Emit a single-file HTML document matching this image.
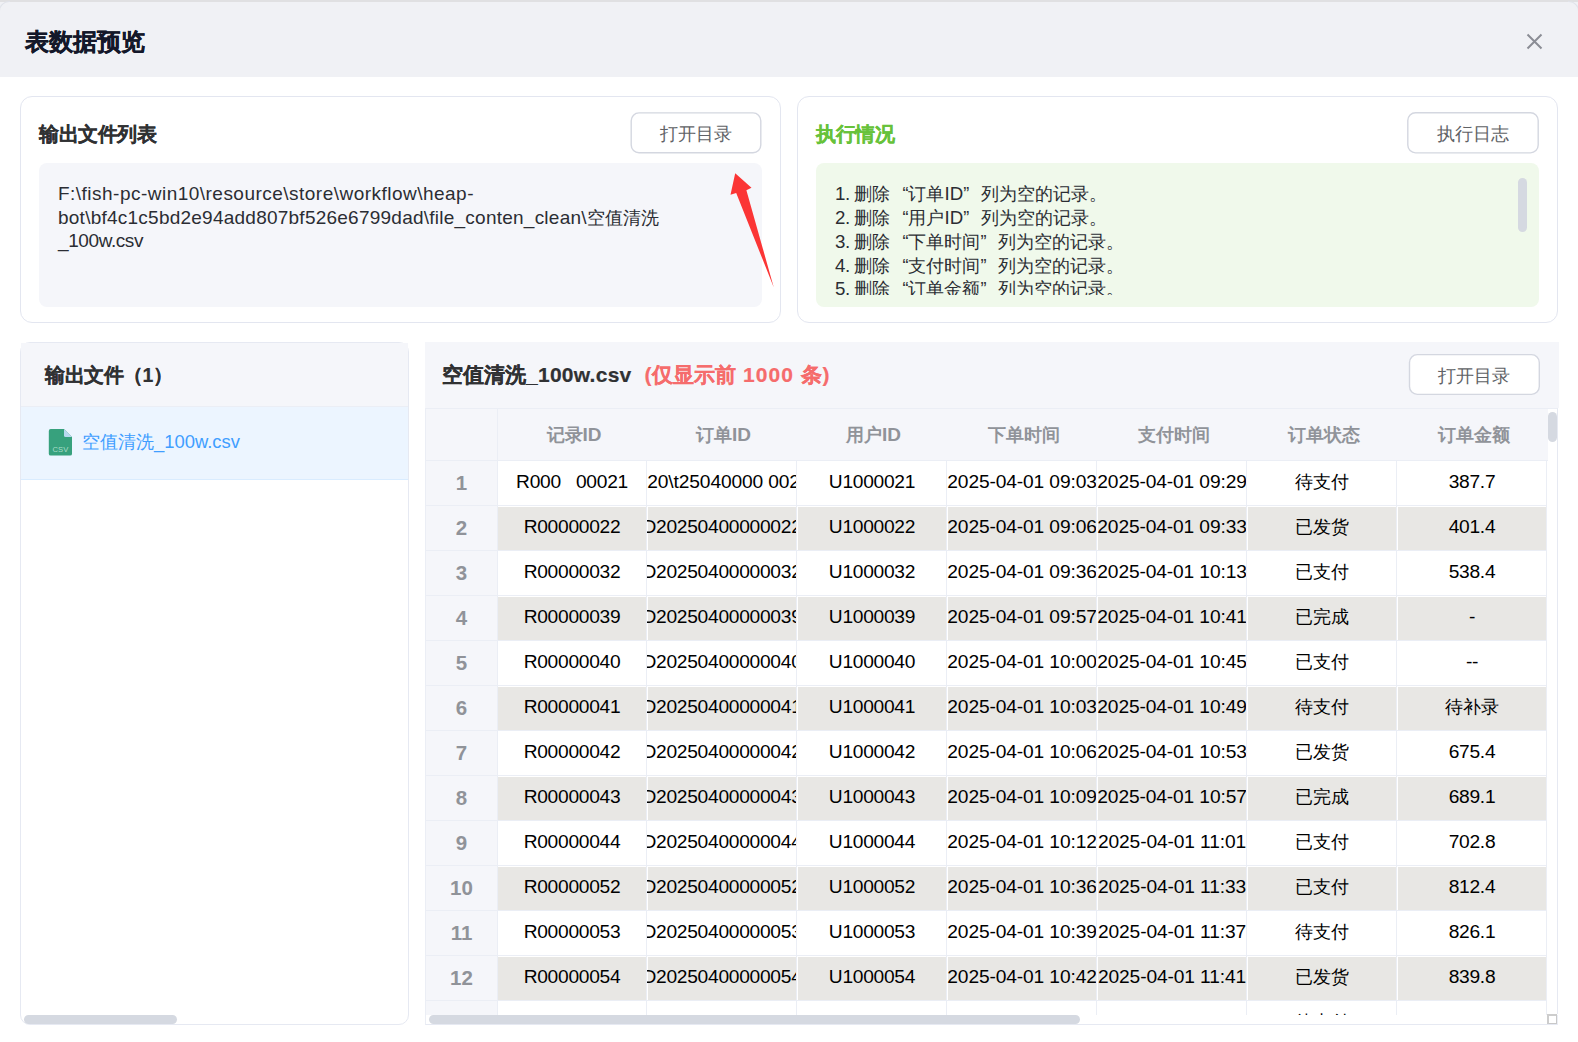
<!DOCTYPE html>
<html lang="zh">
<head>
<meta charset="utf-8">
<title>表数据预览</title>
<style>
html,body{margin:0;padding:0;}
body{width:1578px;height:1042px;overflow:hidden;background:#fff;position:relative;
  font-family:"Liberation Sans",sans-serif;color:#303133;}
*{box-sizing:border-box;}
.abs{position:absolute;}
#topstrip{left:0;top:0;width:1578px;height:2px;background:#e0e0e2;}
#hdr{left:0;top:2px;width:1578px;height:75px;background:#f0f1f5;}
#title{left:25px;top:27px;font-size:24px;line-height:30px;font-weight:bold;color:#14182a;white-space:nowrap;-webkit-text-stroke:0.3px #14182a;}
#close{left:1526px;top:33px;width:17px;height:17px;}
.card{border:1px solid #e3e6f0;border-radius:12px;background:#fff;}
#card1{left:20px;top:96px;width:761px;height:227px;}
#card2{left:797px;top:96px;width:761px;height:227px;}
.ctitle{font-size:19.5px;line-height:26px;font-weight:bold;white-space:nowrap;letter-spacing:-0.5px;-webkit-text-stroke:0.2px currentColor;}
.btn{width:131px;height:41px;border:1.5px solid #d5d8e0;border-radius:8px;background:#fff;
  font-size:18px;line-height:41px;text-align:center;color:#606266;white-space:nowrap;}
.btxt{font-size:18px;line-height:24px;color:#606266;white-space:nowrap;}
.box{border-radius:8px;}
#gbox{left:39px;top:163px;width:723px;height:144px;background:#f5f6fa;}
#vbox{left:816px;top:163px;width:723px;height:144px;background:#f0f9eb;overflow:hidden;}
.ptxt{font-size:18px;line-height:23.7px;color:#2b2d33;white-space:nowrap;}
.la{font-size:18.7px;}
.ln1{height:23.6px;line-height:23.6px;}
.ln2{height:23.87px;line-height:23.87px;}
.ln{font-size:18.7px;letter-spacing:-0.45px;}
.pr{display:inline-block;width:8.7px;text-align:center;}
.q{display:inline-block;width:18px;}
.q.l{text-align:right;}
.q.r{text-align:left;}
#lpanel{left:20px;top:342px;width:389px;height:683px;border:1px solid #e6e9f2;border-radius:10px;background:#fff;}
#lhead{left:0;top:0;width:387px;height:64px;background:#f5f6fa;border-bottom:1px solid #ebeef5;}
#lrow{left:0;top:64px;width:387px;height:73px;background:#ecf5ff;border-bottom:1px solid #d9ecff;}
#rpanel{left:425px;top:342px;width:1134px;height:683px;background:#fff;}
#rhead{left:0;top:0;width:1134px;height:66px;background:#f5f6fa;}
.thumb{background:#d5d9e1;border-radius:5px;}
/* table */
#tbl{left:425px;top:408px;width:1123px;height:607px;overflow:hidden;background:#fff;border-left:1px solid #ebeef5;}
.thead,.tr{display:flex;width:1123px;}
.thead .th:last-child{width:151px;padding-right:1px;}
.th{width:150px;height:53px;flex:none;background:#f5f6fa;border-bottom:1px solid #ebeef5;border-top:1px solid #ebeef5;
  font-size:18px;font-weight:bold;color:#909399;display:flex;align-items:center;justify-content:center;white-space:nowrap;padding-left:3px;}
.td{width:150px;height:45px;flex:none;border-right:1px solid #ebeef5;border-bottom:1px solid #ebeef5;
  font-size:18px;color:#000;display:flex;align-items:center;justify-content:center;white-space:nowrap;overflow:hidden;padding:1px 0 0 1px;background-clip:content-box;}
.idx{width:72px;}
.th.idx{border-right:1px solid #ebeef5;padding:0;}
.c1{width:149px;}
.td.c1{padding-left:0;}
.td.idx{background:#f5f6fa;font-weight:bold;color:#909399;padding:0;}
.tr.even .td{background-color:#e8e7e4;}
.tr.even .td.idx{background-color:#f5f6fa;}
.td span{flex:none;position:relative;top:-2px;}
.td span.la{font-size:19.2px;letter-spacing:-0.28px;top:-1.5px;}
.td.idx span{font-size:20.5px;top:0;}
.th .hl{font-size:19px;}
</style>
</head>
<body>
<div id="topstrip" class="abs"></div>
<div id="hdr" class="abs"></div>
<div class="abs" style="left:-1px;top:1px;width:11px;height:11px;border-top-left-radius:10px;border-top:1px solid #e0e3ea;border-left:1px solid #e0e3ea;"></div>
<div class="abs" style="left:1568px;top:1px;width:11px;height:11px;border-top-right-radius:10px;border-top:1px solid #e0e3ea;border-right:1px solid #e0e3ea;"></div>
<div id="title" class="abs">表数据预览</div>
<svg id="close" class="abs" viewBox="0 0 17 17"><path d="M1.5 1.5L15.5 15.5M15.5 1.5L1.5 15.5" stroke="#8b8d95" stroke-width="2" fill="none"/></svg>

<div id="card1" class="abs card"></div>
<div class="abs ctitle" style="left:39px;top:121px;color:#303133;">输出文件列表</div>
<svg class="abs" style="left:629px;top:111px;" width="134" height="44" viewBox="629 111 134 44"><rect x="631.20" y="112.90" width="129.60" height="39.80" rx="7.8" fill="#fff" stroke="#d4d7e0" stroke-width="1.4"/></svg><div class="abs btxt" style="left:660px;top:122px;">打开目录</div>
<div id="gbox" class="abs box"></div>
<div class="abs ptxt" style="left:58px;top:182px;"><div class="ln1" style="height:23.6px"><span style="font-size:19px;letter-spacing:0.48px">F:\fish-pc-win10\resource\store\workflow\heap-</span></div><div class="ln1" style="height:23.6px"><span style="font-size:19px;letter-spacing:0.24px">bot\bf4c1c5bd2e94add807bf526e6799dad\file_conten_clean\</span>空值清洗</div><div class="ln1" style="height:23.6px"><span style="font-size:19px;letter-spacing:-0.41px">_100w.csv</span></div></div>
<svg class="abs" style="left:725px;top:168px;" width="56" height="126" viewBox="725 168 56 126"><path d="M735.2 173.2L751.5 187.8L746.4 190.2L773.8 287.5L736.2 193L730.5 194.8Z" fill="#fb3535"/></svg>

<div id="card2" class="abs card"></div>
<div class="abs ctitle" style="left:816px;top:121px;color:#67c23a;">执行情况</div>
<svg class="abs" style="left:1406px;top:111px;" width="134" height="44" viewBox="1406 111 134 44"><rect x="1407.80" y="112.70" width="130.40" height="40.20" rx="7.8" fill="#fff" stroke="#d4d7e0" stroke-width="1.4"/></svg><div class="abs btxt" style="left:1437px;top:122px;">执行日志</div>
<div id="vbox" class="abs box">
  <div class="abs" style="left:12px;top:12px;width:699px;height:120px;overflow:hidden;">
    <div class="abs ptxt" style="left:7px;top:7px;"><div class="ln2"><span class="ln">1. </span>删除<span class="q l">“</span>订单<span class="la">ID</span><span class="q r">”</span>列为空的记录。</div><div class="ln2"><span class="ln">2. </span>删除<span class="q l">“</span>用户<span class="la">ID</span><span class="q r">”</span>列为空的记录。</div><div class="ln2"><span class="ln">3. </span>删除<span class="q l">“</span>下单时间<span class="q r">”</span>列为空的记录。</div><div class="ln2"><span class="ln">4. </span>删除<span class="q l">“</span>支付时间<span class="q r">”</span>列为空的记录。</div><div class="ln2"><span class="ln">5. </span>删除<span class="q l">“</span>订单金额<span class="q r">”</span>列为空的记录。</div><div class="ln2"><span class="ln">6. </span>删除<span class="q l">“</span>订单状态<span class="q r">”</span>列为空的记录。</div></div>
  </div>
  <div class="abs thumb" style="left:702px;top:15px;width:9px;height:54px;"></div>
</div>

<div id="lpanel" class="abs">
  <div id="lhead" class="abs"></div>
  <div id="lrow" class="abs"></div>
  <div class="abs thumb" style="left:3px;top:672px;width:153px;height:9px;"></div>
</div>
<div class="abs ctitle" style="left:45px;top:362px;color:#303133;">输出文件（1）</div>
<svg class="abs" style="left:48px;top:428px;" width="25" height="28" viewBox="0 0 25 28"><path d="M2.7 1H16L24 9V25.7Q24 27.6 22.1 27.6H2.7Q0.8 27.6 0.8 25.7V2.9Q0.8 1 2.7 1Z" fill="#37a17d"/><path d="M16 1L24 9H17.5Q16 9 16 7.5Z" fill="#b9d8f0"/><text x="4.6" y="23.6" font-family="Liberation Sans, sans-serif" font-size="7.6" fill="#a9ddc8">CSV</text></svg>
<div class="abs" style="left:82px;top:430px;font-size:18px;line-height:24px;color:#409eff;white-space:nowrap;">空值清洗<span style="font-size:18.4px;">_100w.csv</span></div>

<div id="rpanel" class="abs"><div id="rhead" class="abs"></div></div>
<div class="abs ctitle" style="left:442px;top:362px;color:#303133;font-size:21px;letter-spacing:0;">空值清洗<span style="letter-spacing:0.27px">_100w.csv</span><span style="color:#f56c6c;margin-left:12px;"><span class="pr">(</span>仅显示前<span style="letter-spacing:1px"> 1000 </span>条<span class="pr">)</span></span></div>
<svg class="abs" style="left:1407px;top:352px;" width="135" height="45" viewBox="1407 352 135 45"><rect x="1409.50" y="354.60" width="129.80" height="39.80" rx="7.8" fill="#fff" stroke="#d4d7e0" stroke-width="1.4"/></svg><div class="abs btxt" style="left:1438px;top:364px;">打开目录</div>

<div id="tbl" class="abs">
<div class="thead"><div class="th idx"></div><div class="th c1">记录<span class="hl">ID</span></div><div class="th">订单<span class="hl">ID</span></div><div class="th">用户<span class="hl">ID</span></div><div class="th">下单时间</div><div class="th">支付时间</div><div class="th">订单状态</div><div class="th">订单金额</div></div>
<div class="tr"><div class="td idx"><span>1</span></div><div class="td c1"><span class="la">R000&nbsp;&nbsp;&nbsp;00021</span></div><div class="td"><span class="la" style="letter-spacing:-0.13px">D20\t25040000 0021</span></div><div class="td"><span class="la">U1000021</span></div><div class="td"><span class="la" style="letter-spacing:-0.13px">2025-04-01 09:03</span></div><div class="td"><span class="la" style="letter-spacing:-0.13px">2025-04-01 09:29</span></div><div class="td"><span class="cj">待支付</span></div><div class="td"><span class="la">387.7</span></div></div>
<div class="tr even"><div class="td idx"><span>2</span></div><div class="td c1"><span class="la">R00000022</span></div><div class="td"><span class="la">D20250400000022</span></div><div class="td"><span class="la">U1000022</span></div><div class="td"><span class="la" style="letter-spacing:-0.13px">2025-04-01 09:06</span></div><div class="td"><span class="la" style="letter-spacing:-0.13px">2025-04-01 09:33</span></div><div class="td"><span class="cj">已发货</span></div><div class="td"><span class="la">401.4</span></div></div>
<div class="tr"><div class="td idx"><span>3</span></div><div class="td c1"><span class="la">R00000032</span></div><div class="td"><span class="la">D20250400000032</span></div><div class="td"><span class="la">U1000032</span></div><div class="td"><span class="la" style="letter-spacing:-0.13px">2025-04-01 09:36</span></div><div class="td"><span class="la" style="letter-spacing:-0.13px">2025-04-01 10:13</span></div><div class="td"><span class="cj">已支付</span></div><div class="td"><span class="la">538.4</span></div></div>
<div class="tr even"><div class="td idx"><span>4</span></div><div class="td c1"><span class="la">R00000039</span></div><div class="td"><span class="la">D20250400000039</span></div><div class="td"><span class="la">U1000039</span></div><div class="td"><span class="la" style="letter-spacing:-0.13px">2025-04-01 09:57</span></div><div class="td"><span class="la" style="letter-spacing:-0.13px">2025-04-01 10:41</span></div><div class="td"><span class="cj">已完成</span></div><div class="td"><span class="la">-</span></div></div>
<div class="tr"><div class="td idx"><span>5</span></div><div class="td c1"><span class="la">R00000040</span></div><div class="td"><span class="la">D20250400000040</span></div><div class="td"><span class="la">U1000040</span></div><div class="td"><span class="la" style="letter-spacing:-0.13px">2025-04-01 10:00</span></div><div class="td"><span class="la" style="letter-spacing:-0.13px">2025-04-01 10:45</span></div><div class="td"><span class="cj">已支付</span></div><div class="td"><span class="la">--</span></div></div>
<div class="tr even"><div class="td idx"><span>6</span></div><div class="td c1"><span class="la">R00000041</span></div><div class="td"><span class="la">D20250400000041</span></div><div class="td"><span class="la">U1000041</span></div><div class="td"><span class="la" style="letter-spacing:-0.13px">2025-04-01 10:03</span></div><div class="td"><span class="la" style="letter-spacing:-0.13px">2025-04-01 10:49</span></div><div class="td"><span class="cj">待支付</span></div><div class="td"><span class="cj">待补录</span></div></div>
<div class="tr"><div class="td idx"><span>7</span></div><div class="td c1"><span class="la">R00000042</span></div><div class="td"><span class="la">D20250400000042</span></div><div class="td"><span class="la">U1000042</span></div><div class="td"><span class="la" style="letter-spacing:-0.13px">2025-04-01 10:06</span></div><div class="td"><span class="la" style="letter-spacing:-0.13px">2025-04-01 10:53</span></div><div class="td"><span class="cj">已发货</span></div><div class="td"><span class="la">675.4</span></div></div>
<div class="tr even"><div class="td idx"><span>8</span></div><div class="td c1"><span class="la">R00000043</span></div><div class="td"><span class="la">D20250400000043</span></div><div class="td"><span class="la">U1000043</span></div><div class="td"><span class="la" style="letter-spacing:-0.13px">2025-04-01 10:09</span></div><div class="td"><span class="la" style="letter-spacing:-0.13px">2025-04-01 10:57</span></div><div class="td"><span class="cj">已完成</span></div><div class="td"><span class="la">689.1</span></div></div>
<div class="tr"><div class="td idx"><span>9</span></div><div class="td c1"><span class="la">R00000044</span></div><div class="td"><span class="la">D20250400000044</span></div><div class="td"><span class="la">U1000044</span></div><div class="td"><span class="la" style="letter-spacing:-0.13px">2025-04-01 10:12</span></div><div class="td"><span class="la" style="letter-spacing:-0.13px">2025-04-01 11:01</span></div><div class="td"><span class="cj">已支付</span></div><div class="td"><span class="la">702.8</span></div></div>
<div class="tr even"><div class="td idx"><span>10</span></div><div class="td c1"><span class="la">R00000052</span></div><div class="td"><span class="la">D20250400000052</span></div><div class="td"><span class="la">U1000052</span></div><div class="td"><span class="la" style="letter-spacing:-0.13px">2025-04-01 10:36</span></div><div class="td"><span class="la" style="letter-spacing:-0.13px">2025-04-01 11:33</span></div><div class="td"><span class="cj">已支付</span></div><div class="td"><span class="la">812.4</span></div></div>
<div class="tr"><div class="td idx"><span>11</span></div><div class="td c1"><span class="la">R00000053</span></div><div class="td"><span class="la">D20250400000053</span></div><div class="td"><span class="la">U1000053</span></div><div class="td"><span class="la" style="letter-spacing:-0.13px">2025-04-01 10:39</span></div><div class="td"><span class="la" style="letter-spacing:-0.13px">2025-04-01 11:37</span></div><div class="td"><span class="cj">待支付</span></div><div class="td"><span class="la">826.1</span></div></div>
<div class="tr even"><div class="td idx"><span>12</span></div><div class="td c1"><span class="la">R00000054</span></div><div class="td"><span class="la">D20250400000054</span></div><div class="td"><span class="la">U1000054</span></div><div class="td"><span class="la" style="letter-spacing:-0.13px">2025-04-01 10:42</span></div><div class="td"><span class="la" style="letter-spacing:-0.13px">2025-04-01 11:41</span></div><div class="td"><span class="cj">已发货</span></div><div class="td"><span class="la">839.8</span></div></div>
<div class="tr"><div class="td idx"><span>13</span></div><div class="td c1"><span class="la">R00000055</span></div><div class="td"><span class="la">D20250400000055</span></div><div class="td"><span class="la">U1000055</span></div><div class="td"><span class="la" style="letter-spacing:-0.13px">2025-04-01 10:45</span></div><div class="td"><span class="la" style="letter-spacing:-0.13px">2025-04-01 11:45</span></div><div class="td"><span class="cj">待支付</span></div><div class="td"><span class="la">853.5</span></div></div>
</div>
<!-- table scrollbars / frame -->
<div class="abs" style="left:1548px;top:408px;width:10px;height:606px;background:#fff;border-right:1px solid #e6e9f2;border-top:1px solid #ebeef5;"></div>
<div class="abs thumb" style="left:1548px;top:412px;width:9px;height:30px;"></div>
<div class="abs" style="left:425px;top:1015px;width:1133px;height:10px;background:#fff;border-bottom:1px solid #e6e9f2;border-left:1px solid #ebeef5;border-right:1px solid #ebeef5;"></div>
<div class="abs thumb" style="left:429px;top:1015px;width:651px;height:9px;"></div>
<div class="abs" style="left:1547px;top:1014px;width:10px;height:10px;background:#fff;border:1px solid #c8c8c8;border-left:2px solid #cdcdcd;border-top:2px solid #cdcdcd;"></div>
</body>
</html>
